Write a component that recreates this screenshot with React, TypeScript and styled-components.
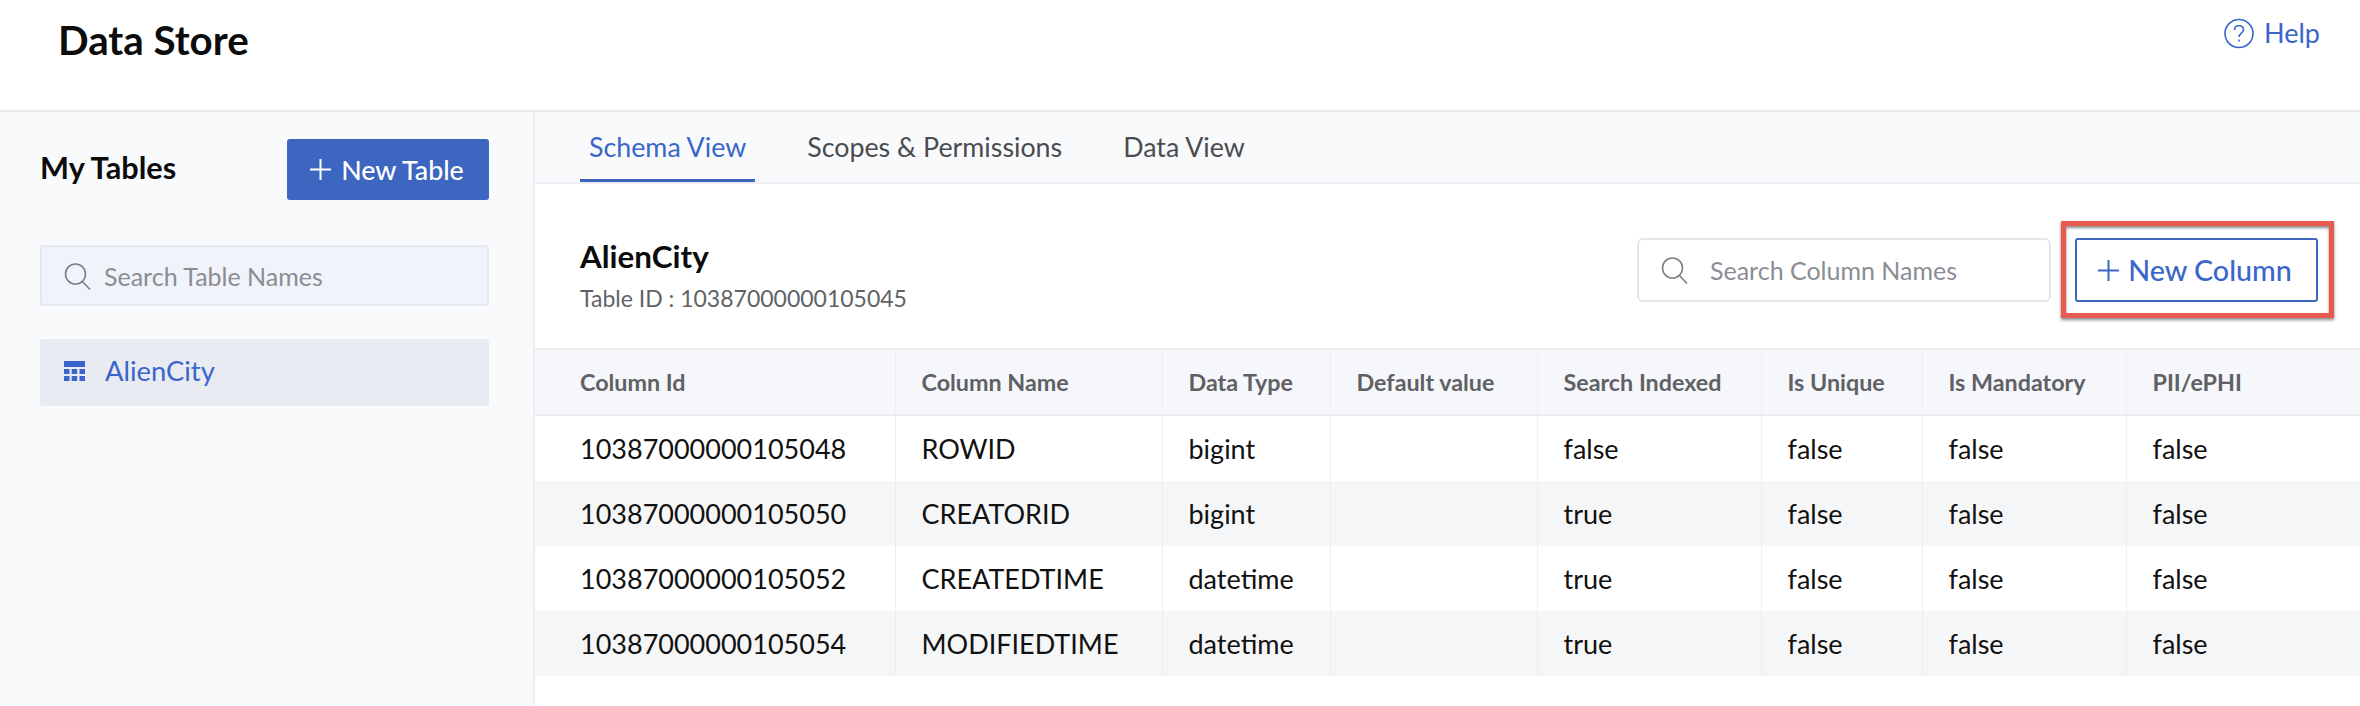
import React, { FC } from 'react';
import styled, { createGlobalStyle } from 'styled-components';

const GlobalStyle = createGlobalStyle`
    html, body {
        margin: 0;
        padding: 0;
        background: #fff;
    }
    body {
        font-family: Lato, "Open Sans", sans-serif;
        color: #111;
    }
`;

const Page = styled.div`
    width: 2360px;
    height: 706px;
    display: flex;
    flex-direction: column;
    overflow: hidden;
`;
const TopBar = styled.header`
    height: 110px;
    flex: none;
    border-bottom: 2px solid #e9ebee;
    display: flex;
    justify-content: space-between;
    align-items: flex-start;
    padding: 0 40px 0 58px;
`;
const PageTitle = styled.h1`
    margin: 16px 0 0;
    font-size: 40.3px;
    line-height: 48px;
    font-weight: 700;
    color: #0c0c0c;
`;
const HelpLink = styled.a`
    display: flex;
    align-items: center;
    gap: 10px;
    margin-top: 17px;
    font-size: 27px;
    line-height: 32px;
    color: #3a66c9;
`;
const Body = styled.div`
    flex: 1;
    display: flex;
    min-height: 0;
`;
const Sidebar = styled.aside`
    width: 535px;
    flex: none;
    box-sizing: border-box;
    padding: 27px 44px 0 40px;
    background: #f9fafc;
    border-right: 2px solid #eceef1;
`;
const SideHead = styled.div`
    display: flex;
    justify-content: space-between;
    align-items: center;
    margin-bottom: 45px;
`;
const SideTitle = styled.h2`
    margin: 0;
    padding-bottom: 5px;
    font-size: 30.7px;
    font-weight: 700;
    color: #0c0c0c;
`;
const PrimaryButton = styled.button`
    width: 202px;
    height: 61px;
    display: flex;
    align-items: center;
    justify-content: center;
    gap: 10px;
    padding: 0 2px 0 0;
    border: none;
    border-radius: 3px;
    background: #3c66c0;
    color: #fff;
    font: 500 26.8px Lato, sans-serif;
`;
const SideSearch = styled.div`
    height: 61px;
    box-sizing: border-box;
    display: flex;
    align-items: center;
    gap: 13px;
    padding-left: 22px;
    background: #f0f3f9;
    border: 2px solid #e5e8ef;
    border-radius: 3px;
    font-size: 25px;
    color: #8a8d94;
    margin-bottom: 33px;
`;
const TableItem = styled.div`
    height: 67px;
    box-sizing: border-box;
    display: flex;
    align-items: center;
    gap: 20px;
    padding: 0 0 4px 24px;
    background: #e9ebf3;
    border-radius: 3px;
    font-size: 27.4px;
    color: #3a66c9;
`;
const Main = styled.main`
    flex: 1;
    min-width: 0;
    display: flex;
    flex-direction: column;
`;
const Tabs = styled.nav`
    height: 72px;
    flex: none;
    box-sizing: border-box;
    display: flex;
    gap: 43px;
    padding-left: 45px;
    background: #f9fafc;
    border-bottom: 2px solid #eceef1;
`;
const Tab = styled.div<{ $active?: boolean }>`
    box-sizing: border-box;
    height: 70px;
    padding: 0 9px;
    line-height: 70px;
    font-size: 26.8px;
    color: ${p => (p.$active ? '#3a66c9' : '#4a4c50')};
    border-bottom: 3px solid ${p => (p.$active ? '#3c66c0' : 'transparent')};
`;
const TableHead = styled.section`
    height: 164px;
    flex: none;
    box-sizing: border-box;
    display: flex;
    justify-content: space-between;
    padding: 54px 42px 0 45px;
`;
const TitleBlock = styled.div`
    margin-top: -1px;
`;
const TableName = styled.h3`
    margin: 0;
    font-size: 31.4px;
    line-height: 38px;
    font-weight: 700;
    color: #0c0c0c;
`;
const TableId = styled.div`
    margin-top: 9px;
    font-size: 23px;
    line-height: 28px;
    color: #5f6368;
`;
const Actions = styled.div`
    display: flex;
    gap: 24px;
`;
const ColumnSearch = styled.div`
    width: 414px;
    height: 64px;
    box-sizing: border-box;
    display: flex;
    align-items: center;
    gap: 22px;
    padding-left: 22px;
    border: 2px solid #e3e5ea;
    border-radius: 6px;
    font-size: 25px;
    color: #8a8d94;
`;
const Highlight = styled.div`
    position: relative;
    width: 243px;
    height: 64px;
    &::after {
        content: '';
        position: absolute;
        left: -14px;
        right: -16px;
        top: -17px;
        bottom: -16px;
        border: 5px solid #e8594f;
        box-shadow: 0 2px 3px rgba(60, 60, 60, 0.6), inset 0 2px 3px rgba(60, 60, 60, 0.6);
        pointer-events: none;
    }
`;
const OutlineButton = styled.button`
    width: 100%;
    height: 100%;
    box-sizing: border-box;
    display: flex;
    align-items: center;
    justify-content: center;
    gap: 9px;
    padding: 0 3px 0 0;
    background: #fff;
    border: 2px solid #3c66c0;
    border-radius: 3px;
    color: #3a66c9;
    font: 500 28.7px Lato, sans-serif;
`;
const Grid = styled.table`
    width: 100%;
    table-layout: fixed;
    border-collapse: collapse;
`;
const HeadCell = styled.th<{ $first?: boolean }>`
    height: 64px;
    padding: 0 0 0 ${p => (p.$first ? 45 : 26)}px;
    text-align: left;
    font-size: 23.3px;
    font-weight: 700;
    color: #5f6165;
    background: #f5f7fa;
    border-top: 2px solid #e9ebee;
    border-bottom: 2px solid #e9ebee;
    border-left: ${p => (p.$first ? 'none' : '1px solid #eceef1')};
`;
const Row = styled.tr<{ $odd: boolean }>`
    background: ${p => (p.$odd ? '#f5f6f8' : '#fff')};
`;
const Cell = styled.td<{ $first?: boolean }>`
    height: 65px;
    padding: 0 0 0 ${p => (p.$first ? 45 : 26)}px;
    font-size: 27px;
    color: #111;
    border-left: ${p => (p.$first ? 'none' : '1px solid #eceef1')};
`;

const SearchIcon: FC = () => (
    <svg width="27" height="28" viewBox="0 0 27 28" fill="none" stroke="#7c7f86" strokeWidth="1.6">
        <circle cx="11.5" cy="12" r="10" />
        <path d="M18.5 19.5 L26 27.5" />
    </svg>
);
const PlusIcon: FC = () => (
    <svg width="21" height="21" viewBox="0 0 21 21" fill="none" stroke="currentColor" strokeWidth="2">
        <path d="M10.5 0 V21 M0 10.5 H21" />
    </svg>
);
const HelpIcon: FC = () => (
    <svg width="30" height="31" viewBox="0 0 30 31" fill="none" stroke="#3a66c9" strokeWidth="1.6">
        <circle cx="15" cy="15.5" r="14" />
        <path d="M10.5 12 C10.5 9 12.5 7.8 15 7.8 C17.6 7.8 19.5 9.4 19.5 11.8 C19.5 15 15 15.2 15 19" />
        <path d="M15 21.5 V23.5" />
    </svg>
);
const GridIcon: FC = () => (
    <svg width="21" height="20" viewBox="0 0 21 20" fill="#3a66c9">
        <rect x="0" y="0" width="21" height="6" />
        <rect x="0" y="8" width="5.5" height="5" />
        <rect x="7.7" y="8" width="5.5" height="5" />
        <rect x="15.5" y="8" width="5.5" height="5" />
        <rect x="0" y="15" width="5.5" height="5" />
        <rect x="7.7" y="15" width="5.5" height="5" />
        <rect x="15.5" y="15" width="5.5" height="5" />
    </svg>
);

const widths = [360, 267, 168, 207, 224, 161, 204, 234];
const headers = ['Column Id', 'Column Name', 'Data Type', 'Default value', 'Search Indexed', 'Is Unique', 'Is Mandatory', 'PII/ePHI'];
const rows = [
    ['10387000000105048', 'ROWID', 'bigint', '', 'false', 'false', 'false', 'false'],
    ['10387000000105050', 'CREATORID', 'bigint', '', 'true', 'false', 'false', 'false'],
    ['10387000000105052', 'CREATEDTIME', 'datetime', '', 'true', 'false', 'false', 'false'],
    ['10387000000105054', 'MODIFIEDTIME', 'datetime', '', 'true', 'false', 'false', 'false'],
];

const App: FC = () => {
    return (
        <Page>
            <GlobalStyle />
            <TopBar>
                <PageTitle>Data Store</PageTitle>
                <HelpLink><HelpIcon />Help</HelpLink>
            </TopBar>
            <Body>
                <Sidebar>
                    <SideHead>
                        <SideTitle>My Tables</SideTitle>
                        <PrimaryButton><PlusIcon />New Table</PrimaryButton>
                    </SideHead>
                    <SideSearch><SearchIcon />Search Table Names</SideSearch>
                    <TableItem><GridIcon />AlienCity</TableItem>
                </Sidebar>
                <Main>
                    <Tabs>
                        <Tab $active>Schema View</Tab>
                        <Tab>Scopes &amp; Permissions</Tab>
                        <Tab>Data View</Tab>
                    </Tabs>
                    <TableHead>
                        <TitleBlock>
                            <TableName>AlienCity</TableName>
                            <TableId>Table ID : 10387000000105045</TableId>
                        </TitleBlock>
                        <Actions>
                            <ColumnSearch><SearchIcon />Search Column Names</ColumnSearch>
                            <Highlight>
                                <OutlineButton><PlusIcon />New Column</OutlineButton>
                            </Highlight>
                        </Actions>
                    </TableHead>
                    <Grid>
                        <colgroup>
                            {widths.map((w, i) => <col key={i} width={w} />)}
                        </colgroup>
                        <thead>
                            <tr>
                                {headers.map((h, i) => <HeadCell key={h} $first={i === 0}>{h}</HeadCell>)}
                            </tr>
                        </thead>
                        <tbody>
                            {rows.map((r, ri) => (
                                <Row key={r[0]} $odd={ri % 2 === 1}>
                                    {r.map((c, i) => <Cell key={i} $first={i === 0}>{c}</Cell>)}
                                </Row>
                            ))}
                        </tbody>
                    </Grid>
                </Main>
            </Body>
        </Page>
    )
}

export default App
